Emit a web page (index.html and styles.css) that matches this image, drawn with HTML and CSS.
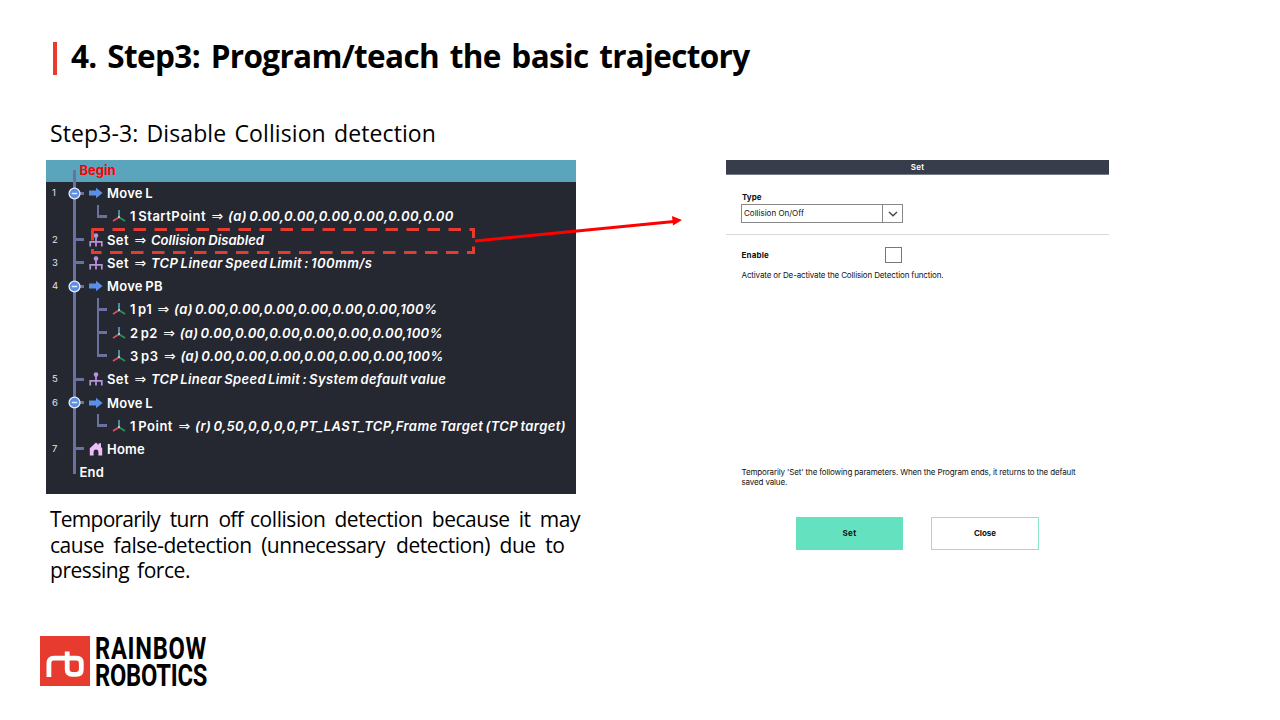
FILE: index.html
```
<!DOCTYPE html>
<html lang="en">
<head>
<meta charset="utf-8">
<title>Step3: Program/teach the basic trajectory</title>
<link rel="stylesheet" href="styles.css">
</head>
<body>
<svg class="defs" width="0" height="0" aria-hidden="true">
  <symbol id="move" viewBox="0 0 14 12"><path fill="#5b8fe6" d="M0 3.6h7V.8L13.6 6 7 11.2V8.4H0z"/></symbol>
  <symbol id="set" viewBox="0 0 14 14"><g fill="none" stroke="#b992dc" stroke-width="1.7"><path d="M7 4v9.6M1.2 13.6V8.8h11.6v4.8"/></g><circle cx="7" cy="2.6" r="2.3" fill="#b992dc"/></symbol>
  <symbol id="home" viewBox="0 0 14 14"><path fill="#efbdfb" d="M.8 13.5V6.2L7 .6l2.6 2.3V1.3h2.4v3.8l1.2 1.1v7.3H9.4V9.6Q9.2 7.4 7 7.4T4.6 9.6v3.9z"/></symbol>
  <symbol id="axes" viewBox="0 0 14 14"><g fill="none" stroke-width="1.8"><path stroke="#4a9cb4" d="M7 7.5V1"/><path stroke="#d9505f" d="M7 8.2 1 12"/><path stroke="#2f8f5c" d="M7 8.2 13 12"/></g><circle cx="7" cy="7.9" r="1" fill="#dfe6e6"/></symbol>
  <symbol id="fold" viewBox="0 0 12 12"><circle cx="6" cy="6" r="5" fill="#5b8fe6" stroke="#e8edf8" stroke-width="1.2"/><path d="M3.5 6h5" stroke="#e8edf8" stroke-width="1.3"/></symbol>
</svg>
<main class="slide">
  <header class="title"><i class="title-bar"></i><h1>4. Step3: Program/teach the basic trajectory</h1></header>
  <div class="columns">
    <section class="left">
      <h2>Step3-3: Disable Collision detection</h2>
      <div class="tree">
        <div class="begin">Begin</div>
        <div class="row branch"><span class="num">1</span><svg class="fold"><use href="#fold"/></svg><svg class="icon arrow-icon"><use href="#move"/></svg><b>Move L</b></div>
        <div class="row child last"><i class="elbow"></i><svg class="icon"><use href="#axes"/></svg><b class="ls5">1 StartPoint</b><span class="imp">⇒</span><em class="ls44">(a) 0.00,0.00,0.00,0.00,0.00,0.00</em></div>
        <div class="row branch"><span class="num">2</span><svg class="icon"><use href="#set"/></svg><b class="ls4">Set</b><span class="imp">⇒</span><em class="ls1">Collision Disabled</em></div>
        <div class="row branch"><span class="num">3</span><svg class="icon"><use href="#set"/></svg><b class="ls4">Set</b><span class="imp">⇒</span><em class="ls44">TCP Linear Speed Limit : 100mm/s</em></div>
        <div class="row branch"><span class="num">4</span><svg class="fold"><use href="#fold"/></svg><svg class="icon arrow-icon"><use href="#move"/></svg><b>Move PB</b></div>
        <div class="row child"><i class="elbow"></i><svg class="icon"><use href="#axes"/></svg><b class="ls4">1 p1</b><span class="imp">⇒</span><em class="ls35">(a) 0.00,0.00,0.00,0.00,0.00,0.00,100%</em></div>
        <div class="row child"><i class="elbow"></i><svg class="icon"><use href="#axes"/></svg><b class="ls4">2 p2</b><span class="imp">⇒</span><em class="ls35">(a) 0.00,0.00,0.00,0.00,0.00,0.00,100%</em></div>
        <div class="row child last"><i class="elbow"></i><svg class="icon"><use href="#axes"/></svg><b class="ls5">3 p3</b><span class="imp">⇒</span><em class="ls35">(a) 0.00,0.00,0.00,0.00,0.00,0.00,100%</em></div>
        <div class="row branch"><span class="num">5</span><svg class="icon"><use href="#set"/></svg><b class="ls4">Set</b><span class="imp">⇒</span><em class="ls35">TCP Linear Speed Limit : System default value</em></div>
        <div class="row branch"><span class="num">6</span><svg class="fold"><use href="#fold"/></svg><svg class="icon arrow-icon"><use href="#move"/></svg><b>Move L</b></div>
        <div class="row child last"><i class="elbow"></i><svg class="icon"><use href="#axes"/></svg><b class="ls5">1 Point</b><span class="imp">⇒</span><em class="ls42">(r) 0,50,0,0,0,0,PT_LAST_TCP,Frame Target (TCP target)</em></div>
        <div class="row branch"><span class="num">7</span><svg class="icon"><use href="#home"/></svg><b>Home</b></div>
        <div class="row end"><b>End</b></div>
        <svg class="callout" viewBox="0 0 600 60">
          <path d="M1.500 23.500H383.500V46.500H2.500V23.500" fill="none" stroke="#e63b2e" stroke-width="3" stroke-dasharray="12.500 8.500"/>
          <path d="M385 35 584 15.500" stroke="#f00" stroke-width="3"/>
          <path d="M582 10 592 14 583 19.500z" fill="#f00"/>
        </svg>
      </div>
      <div class="note">
        <p><span class="s1">Temporarily turn off</span><span class="s2">collision detection because it may</span></p>
        <p><span class="s3">cause false-detection (unnecessary</span><span class="s4">detection) due to</span></p>
        <p><span class="s5">pressing force.</span></p>
      </div>
    </section>
    <section class="dialog">
      <div class="dialog-head">Set</div>
      <div class="type">
        <strong>Type</strong>
        <div class="select"><span>Collision On/Off</span><i><svg width="10" height="6" viewBox="0 0 10 6"><path d="M1 1l4 3.700L9 1" fill="none" stroke="#444" stroke-width="1.400"/></svg></i></div>
      </div>
      <div class="enable"><strong>Enable</strong><i class="check"></i></div>
      <p class="desc">Activate or De-activate the Collision Detection function.</p>
      <p class="hint">Temporarily 'Set' the following parameters. When the Program ends, it returns to the default<br>saved value.</p>
      <div class="buttons"><div class="btn primary">Set</div><div class="btn">Close</div></div>
    </section>
  </div>
  <footer class="brand">
    <svg width="50" height="50" viewBox="0 0 50 50"><path fill="#e63b2e" d="M0 0h50v50H0z"/><path d="M8.900 41V27q0-4.800 4.800-4.800H36.500q4.800 0 4.800 4.800v6.500q0 4.800-4.800 4.800h-4.500q-4.800 0-4.800-4.800V15.500" fill="none" stroke="#fff" stroke-width="4.800"/></svg>
    <div class="brand-name">RAINBOW<br>ROBOTICS</div>
  </footer>
</main>
</body>
</html>
```
FILE: styles.css
```
* { box-sizing: border-box; }
body { margin: 0; background: #fff; color: #000; font-family: "Open Sans", sans-serif; }
h1, h2, p { margin: 0; font-weight: 400; }
svg { display: block; flex: none; }
.defs { position: absolute; }
.slide { width: 1280px; height: 720px; overflow: hidden; padding: 40px 0 0 40px; }

.title { display: flex; align-items: center; height: 36px; padding-left: 13px; }
.title-bar { width: 4px; height: 33px; background: #e63b2e; margin-right: 14px; }
h1 { width: 678.500px; font-size: 31.500px; font-weight: 700; line-height: 36px; letter-spacing: -0.650px; white-space: nowrap; text-align-last: justify; margin-top: -5px; }

.columns { display: flex; align-items: flex-start; padding-left: 6px; height: 559px; }
.left { width: 680px; }
h2 { width: 386px; height: 84px; margin-left: 4px; padding-top: 41px; font-size: 23px; line-height: 32px; letter-spacing: .1px; white-space: nowrap; text-align-last: justify; }

.tree { position: relative; width: 530px; height: 334px; background: #262831; color: #fff; font: 600 13px/22px Inter, sans-serif; }
.tree::before { content: ""; position: absolute; left: 27px; top: 10px; width: 3px; height: 304px; background: #6b719f; }
.begin { height: 21.500px; padding-left: 33.500px; line-height: 20px; background: #5aa5bc; color: #f00; font-weight: 700; }
.row { position: relative; display: flex; align-items: center; height: 23.270px; white-space: nowrap; padding-left: 43px; }
.row b { font-weight: 600; letter-spacing: .25px; word-spacing: -1px; }
.row em { word-spacing: -1.500px; }
.row .ls5 { letter-spacing: .5px; word-spacing: -1.500px; }
.row .ls4 { letter-spacing: .4px; word-spacing: -1.500px; }
.ls44 { letter-spacing: .44px; }
.ls42 { letter-spacing: .43px; }
.ls35 { letter-spacing: .36px; }
.row .ls1 { letter-spacing: .05px; word-spacing: -.5px; }
.num { width: 24px; margin-left: -37px; margin-right: 13px; font-size: 9.500px; font-weight: 400; color: #e4e4e8; }
.branch::before { content: ""; position: absolute; left: 30px; top: 10px; width: 8px; height: 3px; background: #6b719f; }
.fold { position: absolute; left: 22px; top: 5px; width: 13px; height: 13px; }
.icon { width: 14px; height: 14px; margin-right: 4px; }
.arrow-icon { height: 12px; }
.imp { width: 12px; margin: 0 4.500px 0 5.500px; font: 400 14px/20px "DejaVu Sans", sans-serif; }
.child { padding-left: 66px; }
.elbow { position: absolute; left: 51px; top: 0; width: 10px; height: 100%; border-left: 2.500px solid #6b719f; }
.elbow::after { content: ""; position: absolute; left: 0; top: 10px; width: 8px; height: 3px; background: #6b719f; }
.last .elbow { height: 13px; }
.end { padding-left: 33.500px; }
.callout { position: absolute; left: 44px; top: 46px; width: 600px; height: 60px; }

.note { padding: 13px 0 0 4px; font-size: 21px; line-height: 25.500px; }
.note p { display: flex; height: 25.500px; }
.note span { flex: none; white-space: nowrap; text-align-last: justify; letter-spacing: -.45px; }
.note .s1 { width: 193px; margin-right: 7px; letter-spacing: -.75px; }
.s2 { width: 330px; }
.s3 { width: 335px; margin-right: 11px; }
.s4 { width: 168.500px; }
.s5 { width: 140px; }

.dialog { width: 383px; margin-top: 84px; font: 400 8px/11px Inter, sans-serif; color: #111; }
.dialog-head { height: 15px; line-height: 14px; background: #383d4b; border-bottom: 1px solid #777b86; color: #fff; font-weight: 600; text-align: center; letter-spacing: .3px; }
.dialog strong { font-weight: 700; }
.type { height: 60px; padding: 17px 0 0 15px; border-bottom: 1.500px solid #d8d8d8; }
.type strong { display: block; height: 12px; padding-left: 1px; }
.select { display: flex; width: 162px; height: 19px; border: 1px solid #888; line-height: 17px; }
.select span { flex: 1; padding-left: 2px; }
.select i { display: flex; width: 20px; align-items: center; justify-content: center; border-left: 1px solid #888; }
.enable { display: flex; align-items: center; height: 40px; padding-left: 15.500px; }
.enable strong { width: 143px; letter-spacing: .15px; }
.check { width: 17px; height: 16px; border: 1.500px solid #777; }
.desc { padding-left: 15.500px; line-height: 11px; margin-top: -5px; letter-spacing: -.137px; }
.hint { height: 50px; padding-left: 15.500px; margin-top: 185.500px; letter-spacing: -.143px; line-height: 10.500px; }
.buttons { display: flex; gap: 28px; padding-left: 70px; font-weight: 700; }
.btn { width: 108px; height: 33.500px; line-height: 31px; border: 1.500px solid #8ce6cb; text-align: center; }
.primary { width: 107px; height: 33px; background: #64e2bf; border-color: #64e2bf; letter-spacing: .3px; }

.brand { display: flex; height: 51px; }
.brand svg { margin-top: 1px; }
.brand-name { margin-left: 5px; width: 152px; height: 54px; font: 700 31px/27px Roboto, sans-serif; letter-spacing: -.330px; white-space: nowrap; transform: scaleX(.765); transform-origin: 0 0; margin-top: -.5px; }
.brand-name::first-line { letter-spacing: .930px; }
```
